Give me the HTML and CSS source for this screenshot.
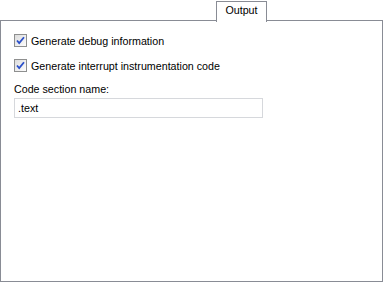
FILE: index.html
```html
<!DOCTYPE html>
<html>
<head>
<meta charset="utf-8">
<link rel="stylesheet" href="styles.css">
</head>
<body>
<div class="tabs">
  <div class="tabstrip"><div class="tab">Output</div></div>
  <div class="panel">
    <label class="check">
      <span class="box"><svg width="9" height="9" viewBox="0 0 9 9"><path d="M1 4.5 L3.2 7 L8 1.2" fill="none" stroke="#2a4fc9" stroke-width="1.8"/></svg></span>
      <span>Generate debug information</span>
    </label>
    <label class="check">
      <span class="box"><svg width="9" height="9" viewBox="0 0 9 9"><path d="M1 4.5 L3.2 7 L8 1.2" fill="none" stroke="#2a4fc9" stroke-width="1.8"/></svg></span>
      <span>Generate interrupt instrumentation code</span>
    </label>
    <div class="field">
      <div class="flabel">Code section name:</div>
      <div class="input">.text</div>
    </div>
  </div>
</div>
</body>
</html>
```
FILE: styles.css
```css
html, body { margin: 0; padding: 0; background: #fff; }
body { font-family: "Liberation Sans", Arial, sans-serif; font-size: 10.7px; color: #000; width: 383px; height: 282px; }
.tabs { display: flex; flex-direction: column; height: 282px; }
.tabstrip { height: 20px; display: flex; padding-left: 216px; }
.tab { box-sizing: border-box; width: 51px; height: 21px; margin-top: 1px; border: 1px solid #898c95; border-bottom: none; background: #fff; text-align: center; line-height: 17px; position: relative; z-index: 1; }
.panel { flex: 1; box-sizing: border-box; border: 1px solid #898c95; padding: 13px 13px 0 13px; display: flex; flex-direction: column; }
.check { display: flex; align-items: center; height: 13px; margin-bottom: 12px; gap: 4px; }
.box { box-sizing: border-box; width: 13px; height: 13px; border: 1px solid #8e8f8f; background: linear-gradient(135deg, #dcdcdc, #fdfdfd); display: flex; align-items: center; justify-content: center; }
.box svg { display: block; }
.field { display: flex; flex-direction: column; }
.flabel { line-height: 13px; margin-top: -1px; }
.input { box-sizing: border-box; width: 249px; height: 20px; margin-top: 2px; border: 1px solid #d6d8dc; padding: 0 3px; line-height: 18px; }
```
